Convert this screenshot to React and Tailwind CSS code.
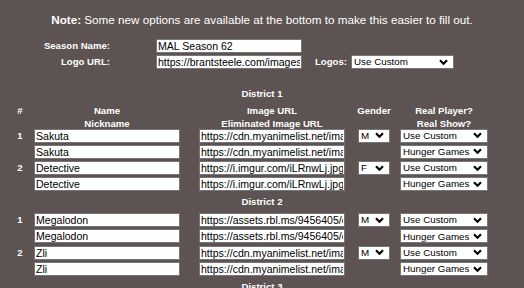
// Hunger Games simulator cast form: season settings and per-district tribute rows.
import React from "react";

const districts = [
  {
    name: "District 1",
    tributes: [
      {
        num: 1,
        name: "Sakuta",
        nick: "Sakuta",
        img: "https://cdn.myanimelist.net/images/characters/9/361839.jpg",
        gender: "M",
      },
      {
        num: 2,
        name: "Detective",
        nick: "Detective",
        img: "https://i.imgur.com/iLRnwLj.jpg",
        gender: "F",
      },
    ],
  },
  {
    name: "District 2",
    tributes: [
      {
        num: 1,
        name: "Megalodon",
        nick: "Megalodon",
        img: "https://assets.rbl.ms/9456405/origin.jpg",
        gender: "M",
      },
      {
        num: 2,
        name: "Zli",
        nick: "Zli",
        img: "https://cdn.myanimelist.net/images/characters/4/52211.jpg",
        gender: "M",
      },
    ],
  },
];

function Chevron() {
  return (
    <svg width="9" height="7" viewBox="0 0 9 7" className="shrink-0">
      <polyline points="1,1.2 4.5,4.8 8,1.2" fill="none" stroke="#000" strokeWidth="2.1" />
    </svg>
  );
}

function FakeSelect({ value, className }) {
  return (
    <div
      className={`flex h-[14px] items-center justify-between border border-[#767676] bg-white pl-[2px] pr-[5px] text-[9.8px] leading-none text-black ${className}`}
    >
      <span className="whitespace-nowrap">{value}</span>
      <Chevron />
    </div>
  );
}

function TextBox({ value, className = "w-[146px]" }) {
  return (
    <input
      readOnly
      defaultValue={value}
      className={`h-[14px] border border-[#767676] bg-white px-[1px] text-[10.55px] leading-none text-black outline-none ${className}`}
    />
  );
}

function TributeRows({ t }) {
  return (
    <div className="grid grid-cols-[34px_165px_159px_42px_88px] gap-y-[2.3px]">
      <div className="pl-[6px] text-center text-[9.6px] font-bold leading-[14px]">{t.num}</div>
      <TextBox value={t.name} />
      <TextBox value={t.img} />
      <FakeSelect value={t.gender} className="w-[32px]" />
      <FakeSelect value="Use Custom" className="w-[88px]" />

      <div />
      <TextBox value={t.nick} />
      <TextBox value={t.img} />
      <div />
      <FakeSelect value="Hunger Games" className="w-[88px]" />
    </div>
  );
}

export default function App() {
  return (
    <div className="min-h-[288px] w-full overflow-hidden bg-[#5c5352] font-['Liberation_Sans',Arial,sans-serif] text-white">
      <p className="pt-[13px] text-center text-[11.7px] leading-[14px]">
        <b>Note:</b> Some new options are available at the bottom to make this easier to fill out.
      </p>

      <div className="mt-[12px] flex items-center">
        <span className="w-[110px] text-right text-[9.6px] font-bold leading-[12px]">Season Name:</span>
        <TextBox value="MAL Season 62" className="ml-[46px] w-[146px]" />
      </div>
      <div className="mt-[2px] flex items-center">
        <span className="w-[110px] text-right text-[9.6px] font-bold leading-[12px]">Logo URL:</span>
        <TextBox value="https://brantsteele.com/images/logo.png" className="ml-[46px] w-[146px]" />
        <span className="ml-[13px] text-[9.6px] font-bold leading-[12px]">Logos:</span>
        <FakeSelect value="Use Custom" className="ml-[4px] w-[103px]" />
      </div>

      {districts.map((d, i) => (
        <section key={d.name} className={i === 0 ? "mt-[18px]" : "mt-[4px]"}>
          <h3 className="text-center text-[9.6px] font-bold leading-[13px]">{d.name}</h3>
          {i === 0 ? (
            <div className="mt-[4px] grid h-[24.5px] grid-cols-[34px_165px_159px_42px_88px] text-[9.6px] font-bold leading-[13px]">
              <div className="pl-[6px] text-center">#</div>
              <div className="w-[146px] text-center">
                Name
                <br />
                Nickname
              </div>
              <div className="w-[146px] whitespace-nowrap text-center">
                Image URL
                <br />
                Eliminated Image URL
              </div>
              <div className="flex w-[32px] justify-center whitespace-nowrap">Gender</div>
              <div className="w-[88px] whitespace-nowrap text-center">
                Real Player?
                <br />
                Real Show?
              </div>
            </div>
          ) : (
            <div className="h-[4.8px]" />
          )}
          <div className="flex flex-col gap-[2.3px]">
            {d.tributes.map((t) => (
              <TributeRows key={t.num} t={t} />
            ))}
          </div>
        </section>
      ))}

      <section className="mt-[4px]">
        <h3 className="text-center text-[9.6px] font-bold leading-[13px]">District 3</h3>
      </section>
    </div>
  );
}
